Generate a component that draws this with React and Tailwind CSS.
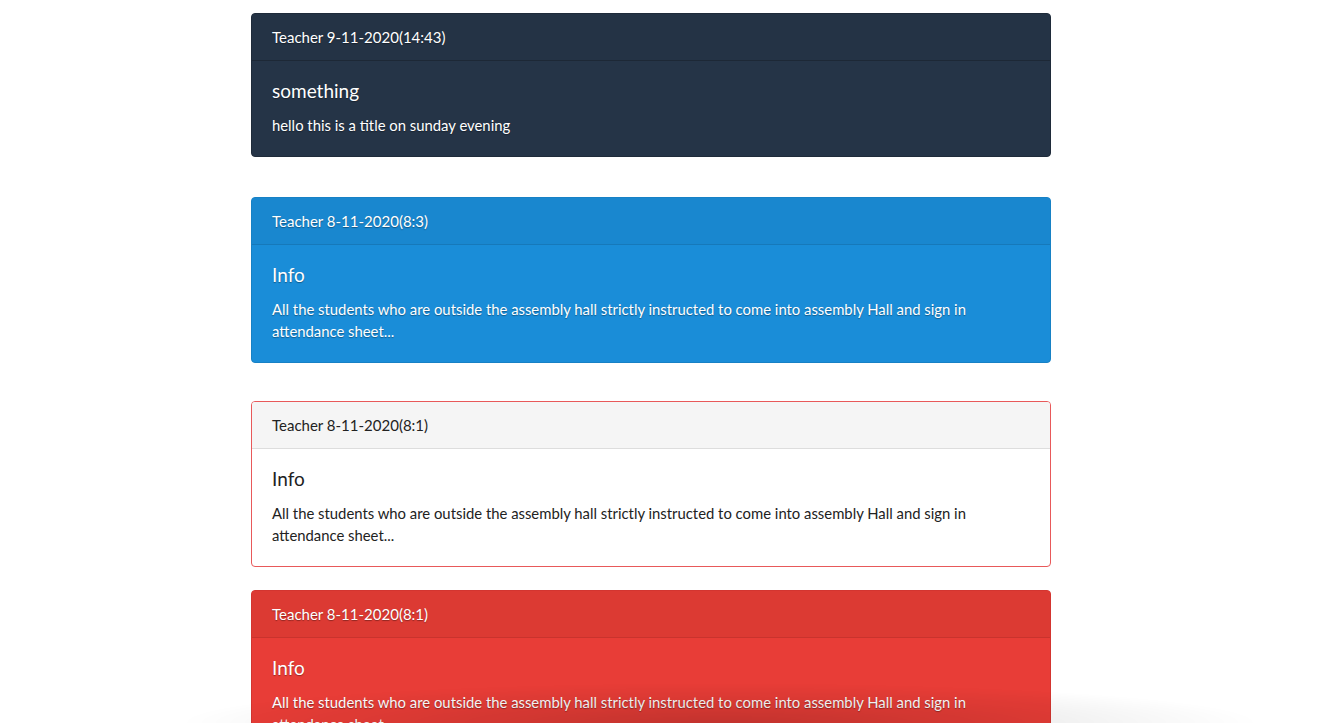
import React from "react";

const Card = ({ header, title, body, variant }) => {
  const styles = {
    dark: {
      card: "bg-[#253447] border-[#1f2b3a] text-white",
      head: "bg-[#243345] border-[#1d2836]",
    },
    blue: {
      card: "bg-[#1a8dd8] border-[#1781c5] text-white",
      head: "bg-[#1987cf] border-[#1679ba]",
    },
    light: {
      card: "bg-white border-[#e8595a] text-[#222]",
      head: "bg-[#f5f5f5] border-[#dddddd]",
    },
    red: {
      card: "bg-[#e83d37] border-[#d33530] text-white",
      head: "bg-[#dc3a33] border-[#c9332d]",
    },
  }[variant];
  const shadow = variant === "light" ? "" : "[text-shadow:0_1px_1px_rgba(0,0,0,0.35)]";
  return (
    <div className={`w-[800px] rounded-[4px] border ${styles.card}`}>
      <div className={`px-5 py-3 border-b rounded-t-[3px] text-[15px] leading-[22px] ${styles.head} ${shadow}`}>
        {header}
      </div>
      <div className={`px-5 py-5 ${shadow}`}>
        <div className="text-[19px] leading-[20px] mb-[13px]">{title}</div>
        <p className="text-[14.85px] leading-[22px]">{body}</p>
      </div>
    </div>
  );
};

const longText =
  "All the students who are outside the assembly hall strictly instructed to come into assembly Hall and sign in attendance sheet...";

export default function App() {
  return (
    <div className="min-h-[723px] bg-white font-['Lato','Liberation_Sans',sans-serif] relative overflow-hidden">
      <div className="ml-[251px] pt-[13px] flex flex-col">
        <Card
          variant="dark"
          header="Teacher 9-11-2020(14:43)"
          title="something"
          body="hello this is a title on sunday evening"
        />
        <div className="h-[40px]" />
        <Card variant="blue" header="Teacher 8-11-2020(8:3)" title="Info" body={longText} />
        <div className="h-[38px]" />
        <Card variant="light" header="Teacher 8-11-2020(8:1)" title="Info" body={longText} />
        <div className="h-[23px]" />
        <Card variant="red" header="Teacher 8-11-2020(8:1)" title="Info" body={longText} />
      </div>
      <div className="fixed bottom-0 left-[180px] w-[1080px] h-[40px] pointer-events-none bg-[radial-gradient(ellipse_50%_100%_at_50%_100%,rgba(0,0,0,0.16),rgba(0,0,0,0.06)_60%,transparent_100%)]" />
    </div>
  );
}
